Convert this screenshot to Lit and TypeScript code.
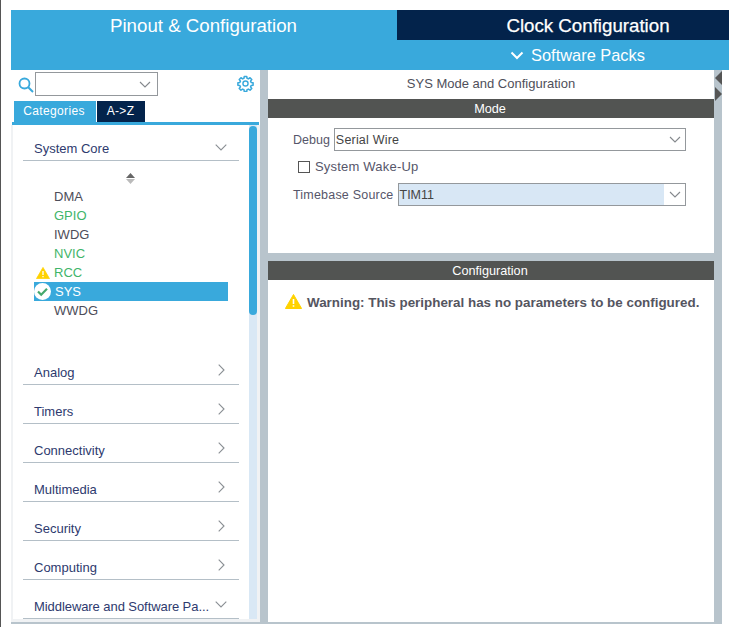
import { LitElement, html, css } from "lit";
import { customElement } from "lit/decorators.js";

const chevDown = html`<svg class="chev dn" width="12" height="7" viewBox="0 0 12 7"><path d="M.7.7 6 6 11.3.7" fill="none" stroke="#8a8f94" stroke-width="1.1"/></svg>`;
const chevRight = html`<svg class="chev rt" width="7" height="12" viewBox="0 0 7 12"><path d="M.7.7 6 6 .7 11.3" fill="none" stroke="#8a8f94" stroke-width="1.1"/></svg>`;
const selChev = html`<svg width="12" height="7" viewBox="0 0 12 7"><path d="M1 1l5 5 5-5" fill="none" stroke="#85898d" stroke-width="1.1"/></svg>`;
const warn = (w: number, h: number) => html`<svg width=${w} height=${h} viewBox="0 0 17 15"><path d="M8.5.5 16.6 14.5H.4Z" fill="#ffd200" stroke="#ffd200" stroke-linejoin="round"/><path d="M8.5 5v5M8.5 11.3v1.4" stroke="#fff" stroke-width="1.6"/></svg>`;

const closed = ["Analog", "Timers", "Connectivity", "Multimedia", "Security", "Computing"];

@customElement("app-root")
export class AppRoot extends LitElement {
  static styles = css`
    :host { display: block; width: 729px; height: 627px; background: #fff; font-family: "Liberation Sans", Arial, sans-serif; overflow: hidden; }
    .page { height: 627px; width: 729px; box-sizing: border-box; padding: 10px 0 3px 10px; border-left: 1px solid #555; display: flex; flex-direction: column; }
    .tabs { display: flex; height: 30px; flex: none; background: #39a9dc; }
    .tab { display: flex; align-items: center; justify-content: center; color: #fff; font-size: 18.7px; padding-top: 1px; box-sizing: border-box; }
    .tab.a { width: 385px; }
    .tab.b { flex: 1; background: #03234b; margin-left: 1px; padding-left: 50px; -webkit-text-stroke: 0.25px #fff; }
    .packs { height: 30px; flex: none; background: #39a9dc; color: #fff; font-size: 16.4px; display: flex; align-items: center; justify-content: center; gap: 7px; padding: 1px 0 0 415px; box-sizing: border-box; }
    .main { flex: 1; display: flex; min-height: 0; background: #b8c4cc; margin-right: 7px; padding-bottom: 2px; box-sizing: border-box; }
    .left { width: 249px; background: #fff; flex: none; display: flex; flex-direction: column; min-height: 0; }
    .search { height: 31px; display: flex; align-items: flex-start; padding: 2px 0 0 7px; flex: none; box-sizing: border-box; }
    .mag { margin-top: 5px; }
    .combo { width: 123px; height: 24px; box-sizing: border-box; border: 1px solid #94989c; margin-left: 1px; display: flex; align-items: center; justify-content: flex-end; padding-right: 6px; background: #fff; }
    .gear { margin: 3px 6px 0 auto; }
    .ltabs { display: flex; height: 21px; padding-left: 3px; flex: none; font-size: 12px; color: #fff; letter-spacing: 0.35px; }
    .lt { display: flex; align-items: center; justify-content: center; padding-bottom: 1px; box-sizing: border-box; }
    .lt.c { width: 82px; background: #39a9dc; padding-right: 2px; }
    .lt.z { width: 48px; background: #03234b; margin-left: 1px; padding-right: 1px; }
    .rule { height: 3px; background: #39a9dc; margin: 0 1px; flex: none; }
    .tree { flex: 1; min-height: 0; display: flex; border-left: 2px solid #f0f2f4; padding: 0 3px 3px 0; background: #f0f2f4; }
    .list { flex: 1; padding: 0 10px; min-width: 0; background: #fff; overflow: hidden; }
    .sb { width: 8px; background: #d9e8f5; flex: none; }
    .sb div { height: 189px; margin-top: 1px; background: #39a9dc; border-radius: 4px; }
    .head { height: 39px; box-sizing: border-box; border-bottom: 1px solid #b4bfc7; display: flex; align-items: flex-end; color: #2e3a6e; font-size: 13px; padding: 0 0 4px 11px; position: relative; white-space: nowrap; }
    .head .chev { position: absolute; }
    .head .chev.rt { right: 14px; bottom: 8px; }
    .head .chev.dn { right: 12px; bottom: 10px; }
    .head.first { height: 36px; }
    .head.first .chev.dn { bottom: 9px; }
    .head.last span { letter-spacing: -0.07px; }
    .sort { height: 26px; box-sizing: border-box; padding: 12px 1px 0 0; display: flex; justify-content: center; }
    .items { padding-left: 11px; height: 159px; box-sizing: border-box; font-size: 13px; }
    .it { height: 19px; display: flex; align-items: center; color: #4d4d59; position: relative; padding-left: 20px; box-sizing: border-box; width: 194px; }
    .it.g { color: #3fb56a; }
    .it.sel { background: #39a9dc; color: #fff; padding-left: 21px; }
    .it svg { position: absolute; left: 2px; }
    .it.sel svg { left: 0; }
    .right { flex: 1; margin: 0 8px; display: flex; flex-direction: column; min-width: 0; }
    .top { background: #fff; height: 183px; flex: none; }
    .bot { background: #fff; flex: 1; margin-top: 8px; }
    .title { height: 29px; box-sizing: border-box; padding-bottom: 2px; display: flex; align-items: center; justify-content: center; font-size: 13px; color: #4f4f5a; }
    .bar { height: 19px; box-sizing: border-box; padding-right: 2px; background: #525452; color: #fff; font-size: 12.7px; display: flex; align-items: center; justify-content: center; }
    .form { padding: 10px 28px 0 25px; font-size: 12.5px; color: #56566a; letter-spacing: 0.2px; }
    .row { display: flex; align-items: center; height: 23px; }
    .dbg { letter-spacing: 0; }
    .box { flex: 1; height: 23px; box-sizing: border-box; border: 1px solid #94989c; display: flex; align-items: center; margin-left: 4px; background: #fff; color: #444; }
    .box .v { flex: 1; padding-left: 1px; height: 100%; display: flex; align-items: center; }
    .box.t .v { background: #d8e7f5; letter-spacing: 0; }
    .box .arr { width: 21px; display: flex; justify-content: center; flex: none; }
    .ck { height: 32px; display: flex; align-items: center; padding-left: 5px; gap: 5px; font-size: 13px; }
    .ck i { width: 10px; height: 10px; border: 1px solid #555; display: block; }
    .ck span { padding-bottom: 2px; }
    .warn { display: flex; align-items: center; gap: 5px; padding: 15px 0 0 17px; color: #55555f; font-weight: 700; font-size: 13.4px; }
    .warn svg { margin-top: -2px; }
    .arrows { position: absolute; left: 715px; top: 71px; display: flex; flex-direction: column; gap: 2px; }
  `;

  render() {
    return html`<div class="page">
      <div class="tabs">
        <div class="tab a">Pinout &amp; Configuration</div>
        <div class="tab b">Clock Configuration</div>
      </div>
      <div class="packs">
        <svg width="14" height="9" viewBox="0 0 14 9"><path d="M1.5 1.5 7 7l5.5-5.5" fill="none" stroke="#fff" stroke-width="2"/></svg>
        <span>Software Packs</span>
      </div>
      <div class="main">
        <div class="left">
          <div class="search">
            <svg class="mag" width="16" height="16" viewBox="0 0 16 16"><circle cx="6.5" cy="6.5" r="5" fill="none" stroke="#39a9dc" stroke-width="1.8"/><path d="M10.2 10.2 15 15" stroke="#39a9dc" stroke-width="2"/></svg>
            <div class="combo">${selChev}</div>
            <svg class="gear" width="17" height="17" viewBox="0 0 24 24"><path d="M10.3 2h3.4l.5 2.7 1.9.8 2.3-1.6 2.4 2.4-1.6 2.3.8 1.9 2.7.5v3.4l-2.7.5-.8 1.9 1.6 2.3-2.4 2.4-2.3-1.6-1.9.8-.5 2.7h-3.4l-.5-2.7-1.9-.8-2.3 1.6-2.4-2.4 1.6-2.3-.8-1.9-2.7-.5v-3.4l2.7-.5.8-1.9-1.6-2.3 2.4-2.4 2.3 1.6 1.9-.8z" fill="none" stroke="#39a9dc" stroke-width="2.2" stroke-linejoin="round"/><circle cx="12" cy="12" r="3.6" fill="none" stroke="#39a9dc" stroke-width="2"/></svg>
          </div>
          <div class="ltabs"><div class="lt c">Categories</div><div class="lt z">A-&gt;Z</div></div>
          <div class="rule"></div>
          <div class="tree">
            <div class="list">
              <div class="head first"><span>System Core</span>${chevDown}</div>
              <div class="sort"><svg width="9" height="11" viewBox="0 0 9 11"><path d="M4.5 0 9 5H0Z" fill="#666"/><path d="M0 6h9L4.5 11Z" fill="#bbb"/></svg></div>
              <div class="items">
                <div class="it">DMA</div>
                <div class="it g">GPIO</div>
                <div class="it">IWDG</div>
                <div class="it g">NVIC</div>
                <div class="it g">${warn(14, 12)}RCC</div>
                <div class="it sel"><svg width="17" height="17" viewBox="0 0 17 17"><circle cx="8.5" cy="8.5" r="8.5" fill="#fff"/><path d="M4 8.5l3.2 3.2L13 5.8" fill="none" stroke="#45a86c" stroke-width="2.2"/></svg>SYS</div>
                <div class="it">WWDG</div>
              </div>
              ${closed.map((c) => html`<div class="head"><span>${c}</span>${chevRight}</div>`)}
              <div class="head last"><span>Middleware and Software Pa...</span>${chevDown}</div>
            </div>
            <div class="sb"><div></div></div>
          </div>
        </div>
        <div class="right">
          <div class="top">
            <div class="title">SYS Mode and Configuration</div>
            <div class="bar">Mode</div>
            <div class="form">
              <div class="row"><span class="dbg">Debug</span><div class="box"><div class="v">Serial Wire</div><div class="arr">${selChev}</div></div></div>
              <div class="ck"><i></i><span>System Wake-Up</span></div>
              <div class="row">Timebase Source<div class="box t"><div class="v">TIM11</div><div class="arr">${selChev}</div></div></div>
            </div>
          </div>
          <div class="bot">
            <div class="bar">Configuration</div>
            <div class="warn">${warn(17, 15)}<span>Warning: This peripheral has no parameters to be configured.</span></div>
          </div>
        </div>
      </div>
      <div class="arrows">
        <svg width="7" height="14" viewBox="0 0 7 14"><path d="M7 0 0 7l7 7Z" fill="#555"/></svg>
        <svg width="7" height="14" viewBox="0 0 7 14"><path d="M0 0l7 7-7 7Z" fill="#555"/></svg>
      </div>
    </div>`;
  }
}
